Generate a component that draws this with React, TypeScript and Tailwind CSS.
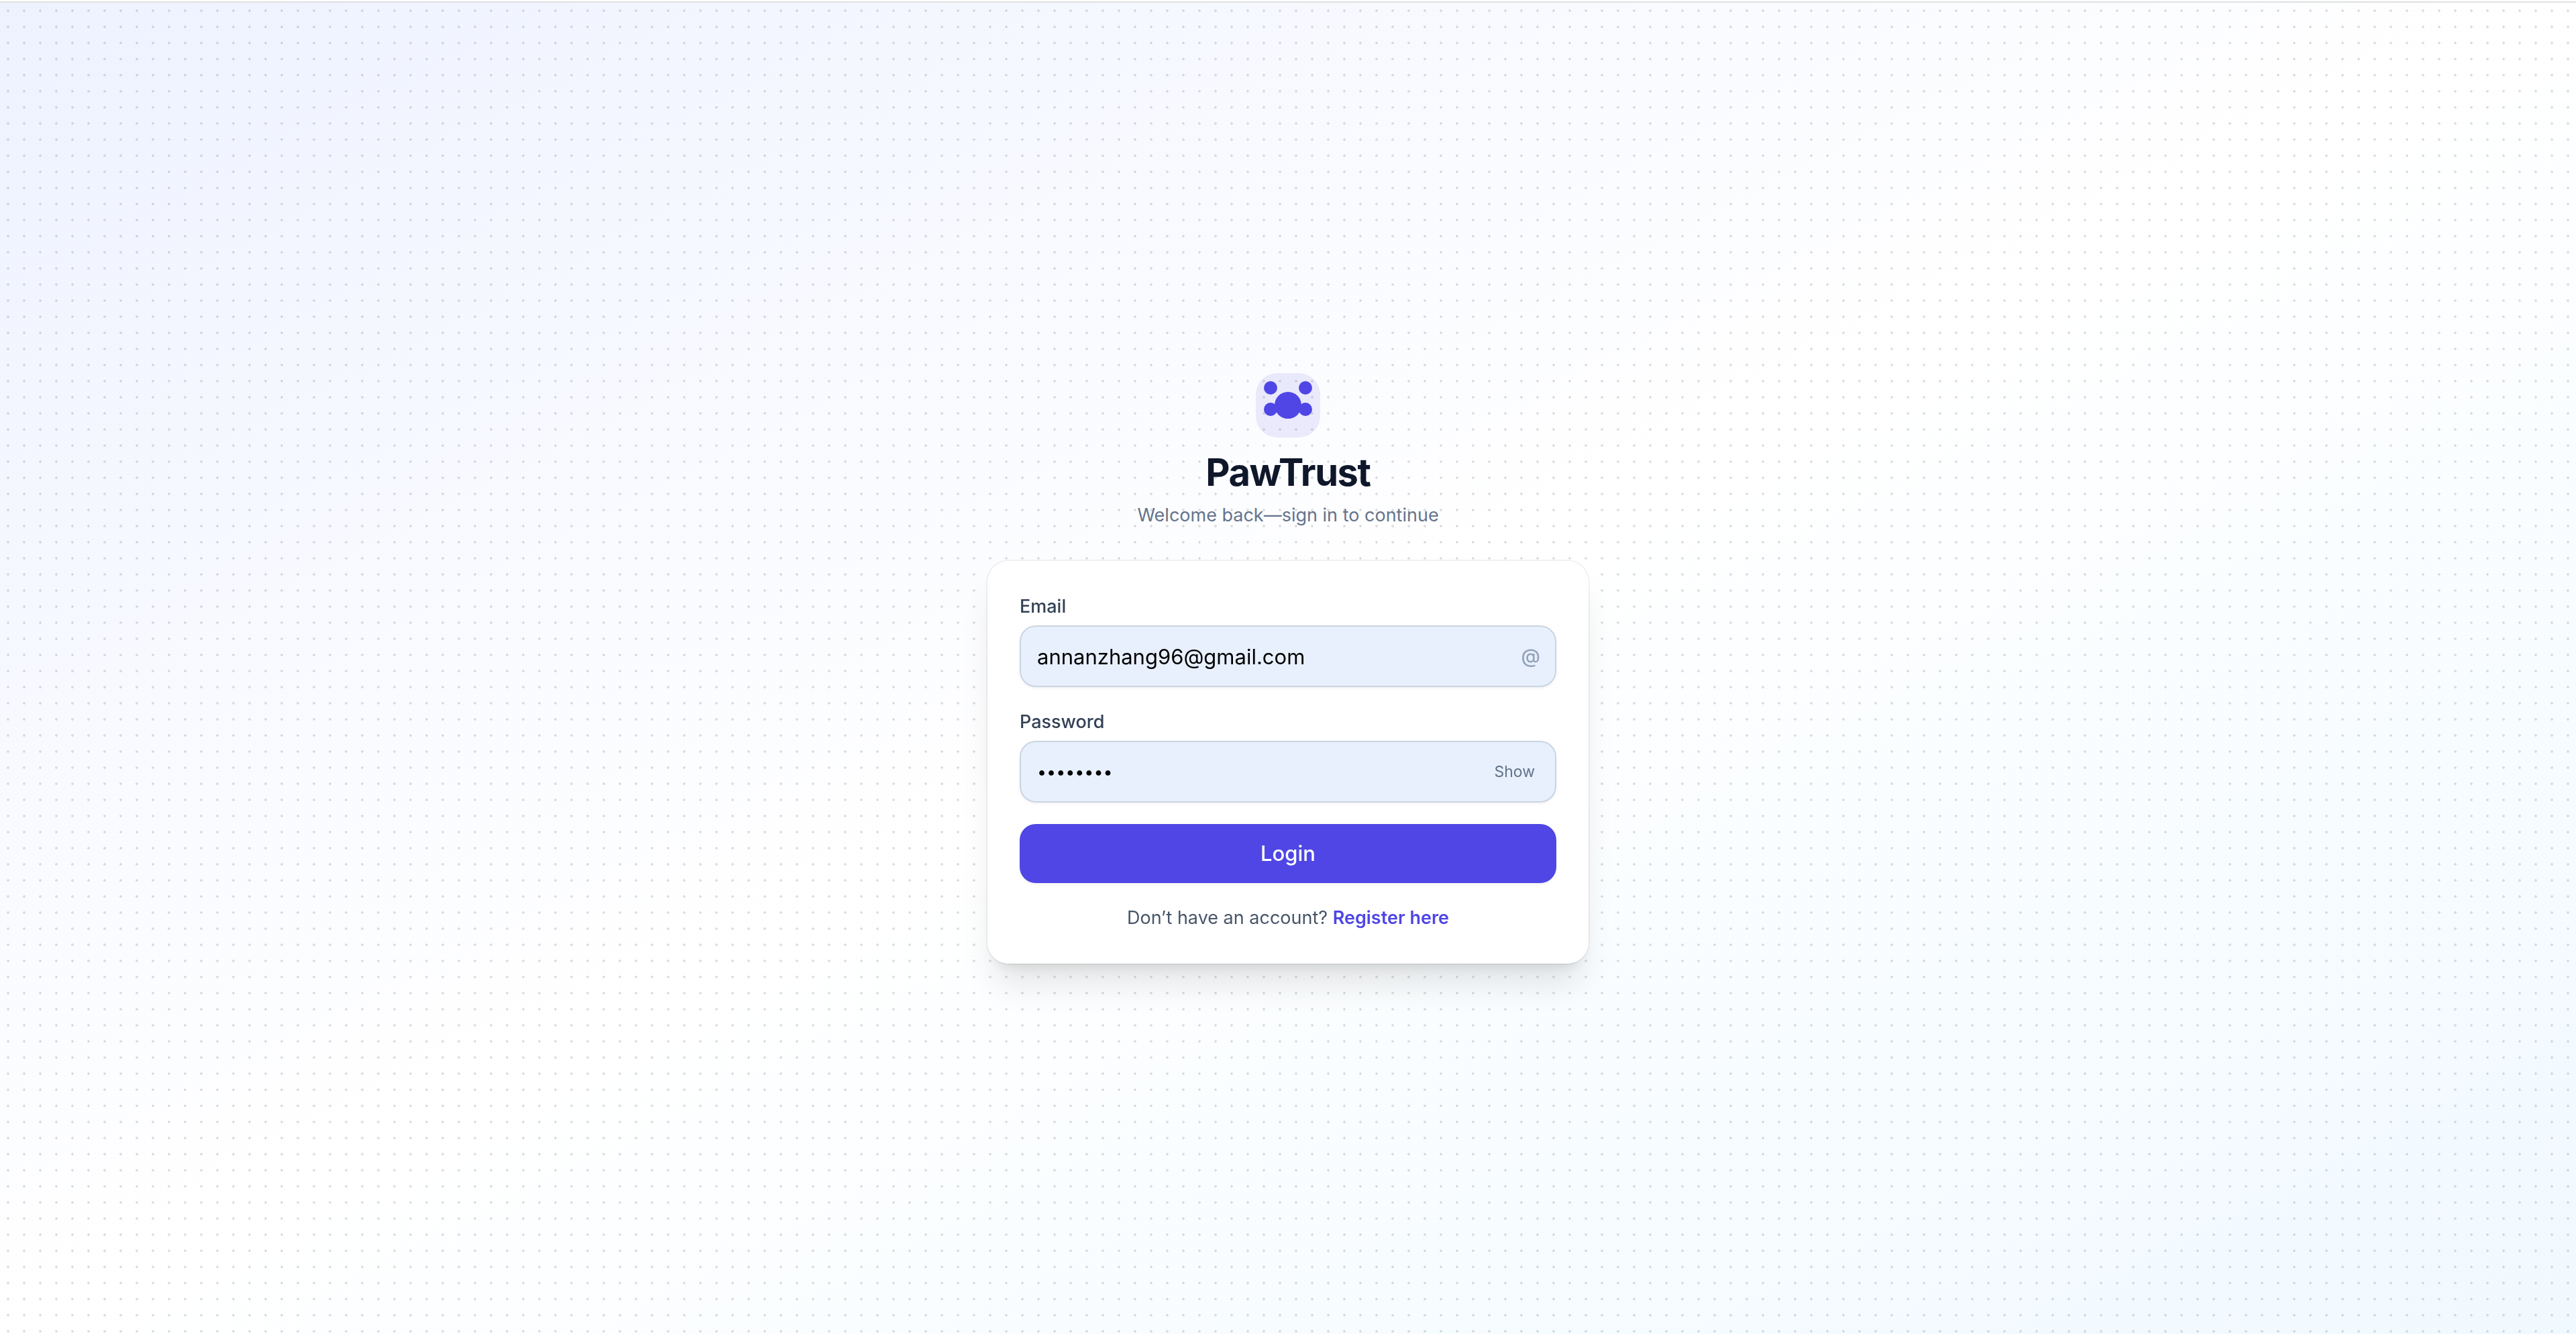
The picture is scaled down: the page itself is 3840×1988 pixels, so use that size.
import { useState } from "react";

function PawLogo() {
  return (
    <div className="flex size-24 items-center justify-center rounded-[32px] bg-[#4f46e5]/10">
      <svg viewBox="0 0 96 96" className="size-24 fill-[#4f46e5]" aria-hidden="true">
        <circle cx="22" cy="22" r="10" />
        <circle cx="74" cy="22" r="10" />
        <circle cx="22" cy="54" r="10" />
        <circle cx="74" cy="54" r="10" />
        <circle cx="48" cy="48" r="20" />
      </svg>
    </div>
  );
}

const fieldClass =
  "block h-[92px] w-full rounded-3xl border-2 border-[#cbd5e1] bg-[#e8f0fe] pl-6 leading-12 text-black shadow-[0_2px_4px_rgb(0_0_0/0.05)] outline-none";

const labelClass = "block text-[27px] leading-10 font-medium text-[#334155]";

export default function App() {
  const [email, setEmail] = useState("annanzhang96@gmail.com");
  const [password, setPassword] = useState("password");
  const [visible, setVisible] = useState(false);

  return (
    <div className="flex min-h-screen flex-col border-t-2 border-white font-['Inter',sans-serif]">
      <div className="h-0.5 bg-[#dfe1e1]" />
      <main className="flex flex-1 flex-col bg-linear-to-br/srgb from-[#eef2ff] via-white to-[#f0f9ff]">
        <div className="flex flex-1 flex-col items-center justify-center bg-[radial-gradient(circle,rgb(0_0_0/0.12)_2px,transparent_2px)] bg-size-[24px_24px]">
          <header className="flex flex-col items-center">
            <PawLogo />
            <h1 className="mt-4 text-[56px] leading-[72px] font-bold tracking-tight text-[#0f172a]">
              PawTrust
            </h1>
            <p className="mt-2 text-[27px] leading-10 text-[#64748b]">
              Welcome back—sign in to continue
            </p>
          </header>

          <form
            className="mt-12 flex w-full max-w-4xl flex-col gap-8 rounded-[32px] bg-white/90 p-12 shadow-[0_0_0_2px_rgb(0_0_0/0.05),0_40px_50px_-10px_rgb(0_0_0/0.1),0_16px_20px_-12px_rgb(0_0_0/0.1)] backdrop-blur-lg"
            onSubmit={(e) => e.preventDefault()}
          >
            <div>
              <label htmlFor="email" className={labelClass}>
                Email
              </label>
              <div className="relative mt-2">
                <input
                  id="email"
                  type="email"
                  value={email}
                  onChange={(e) => setEmail(e.target.value)}
                  className={`${fieldClass} pr-20 text-[31px]`}
                />
                <span
                  aria-hidden="true"
                  className="pointer-events-none absolute inset-y-0 right-6 flex items-center text-[29px] leading-10 font-medium text-[#94a3b8]"
                >
                  @
                </span>
              </div>
            </div>

            <div>
              <label htmlFor="password" className={labelClass}>
                Password
              </label>
              <div className="relative mt-2">
                <input
                  id="password"
                  type={visible ? "text" : "password"}
                  value={password}
                  onChange={(e) => setPassword(e.target.value)}
                  className={`${fieldClass} pr-32 ${visible ? "text-[31px]" : "text-[25px]"}`}
                />
                <button
                  type="button"
                  onClick={() => setVisible(!visible)}
                  className="absolute inset-y-4 right-4 rounded-2xl px-4 text-[23px] leading-8 text-[#64748b]"
                >
                  {visible ? "Hide" : "Show"}
                </button>
              </div>
            </div>

            <button
              type="submit"
              className="rounded-3xl bg-[#4f46e5] py-5 text-[31px] leading-12 font-medium text-white shadow-[0_2px_4px_rgb(0_0_0/0.05)]"
            >
              Login
            </button>

            <p className="text-center text-[27px] leading-10 text-[#475569]">
              Don’t have an account?{" "}
              <a href="#register" className="font-semibold text-[#4f46e5]">
                Register here
              </a>
            </p>
          </form>
        </div>
      </main>
    </div>
  );
}
